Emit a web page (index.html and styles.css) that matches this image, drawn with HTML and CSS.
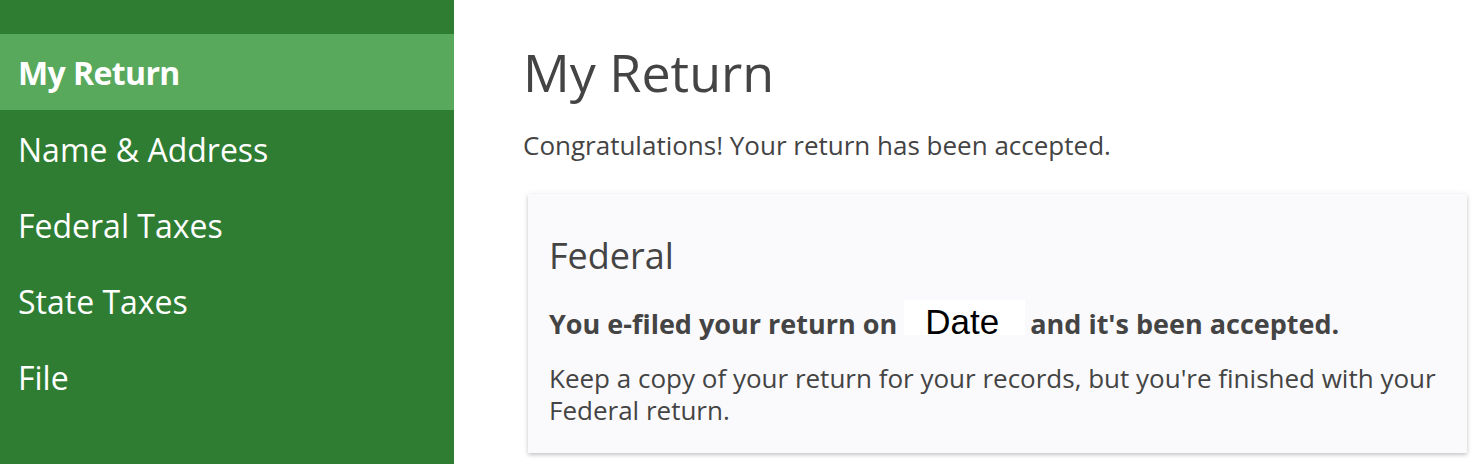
FILE: index.html
```html
<!DOCTYPE html>
<html lang="en">
<head>
<meta charset="utf-8">
<title>My Return</title>
<link rel="stylesheet" href="styles.css">
</head>
<body>
<div class="layout">
  <nav class="sidebar">
    <a class="nav-item active" href="#">My Return</a>
    <a class="nav-item" href="#">Name &amp; Address</a>
    <a class="nav-item" href="#">Federal Taxes</a>
    <a class="nav-item" href="#">State Taxes</a>
    <a class="nav-item" href="#">File</a>
  </nav>
  <main class="main">
    <h1 class="title">My Return</h1>
    <p class="intro">Congratulations! Your return has been accepted.</p>
    <section class="card">
      <h2 class="card-title">Federal</h2>
      <p class="status">You e-filed your return on <span class="date">Date</span> and it's been accepted.</p>
      <p class="note">Keep a copy of your return for your records, but you're finished with your Federal return.</p>
    </section>
  </main>
</div>
</body>
</html>
```
FILE: styles.css
```css
html, body {
  margin: 0;
  padding: 0;
  background: #ffffff;
}
body {
  font-family: "Open Sans", "Noto Sans", sans-serif;
  color: #444444;
}
.layout {
  display: flex;
  height: 464px;
  overflow: hidden;
}
.sidebar {
  width: 454px;
  flex: 0 0 454px;
  background: #2e7d32;
  padding-top: 34px;
  display: flex;
  flex-direction: column;
}
.nav-item {
  display: flex;
  align-items: center;
  box-sizing: border-box;
  height: 76px;
  padding: 2px 0 0 18px;
  color: #ffffff;
  text-decoration: none;
  font-size: 32px;
}
.nav-item.active {
  background: #58a95c;
  font-weight: 700;
  letter-spacing: -0.6px;
  padding-top: 0;
}
.main {
  flex: 1;
  padding: 0 13px 0 69px;
}
.title {
  margin: 36px 0 0;
  font-size: 52px;
  font-weight: 400;
  line-height: 72px;
  color: #444444;
}
.intro {
  margin: 19px 0 0;
  font-size: 26px;
  line-height: 36px;
}
.card {
  margin: 31px 0 0 5px;
  background: #fafafc;
  box-shadow: 0 2px 4px rgba(0, 0, 0, 0.2), 0 0 8px rgba(0, 0, 0, 0.05);
  padding: 38px 21px 27px;
}
.card-title {
  margin: 0;
  font-size: 36px;
  font-weight: 400;
  line-height: 48px;
}
.status {
  margin: 20px 0 0;
  font-size: 27px;
  font-weight: 700;
  line-height: 36px;
}
.date {
  display: inline-block;
  box-sizing: border-box;
  width: 121px;
  height: 35px;
  padding: 8px 0 0 21px;
  margin: 0 -2px 0 0;
  background: #ffffff;
  font-family: "Liberation Sans", Arial, sans-serif;
  font-weight: 400;
  font-size: 35px;
  line-height: 27px;
  color: #000000;
}
.note {
  margin: 20px 0 0;
  font-size: 26px;
  line-height: 32px;
}
```
